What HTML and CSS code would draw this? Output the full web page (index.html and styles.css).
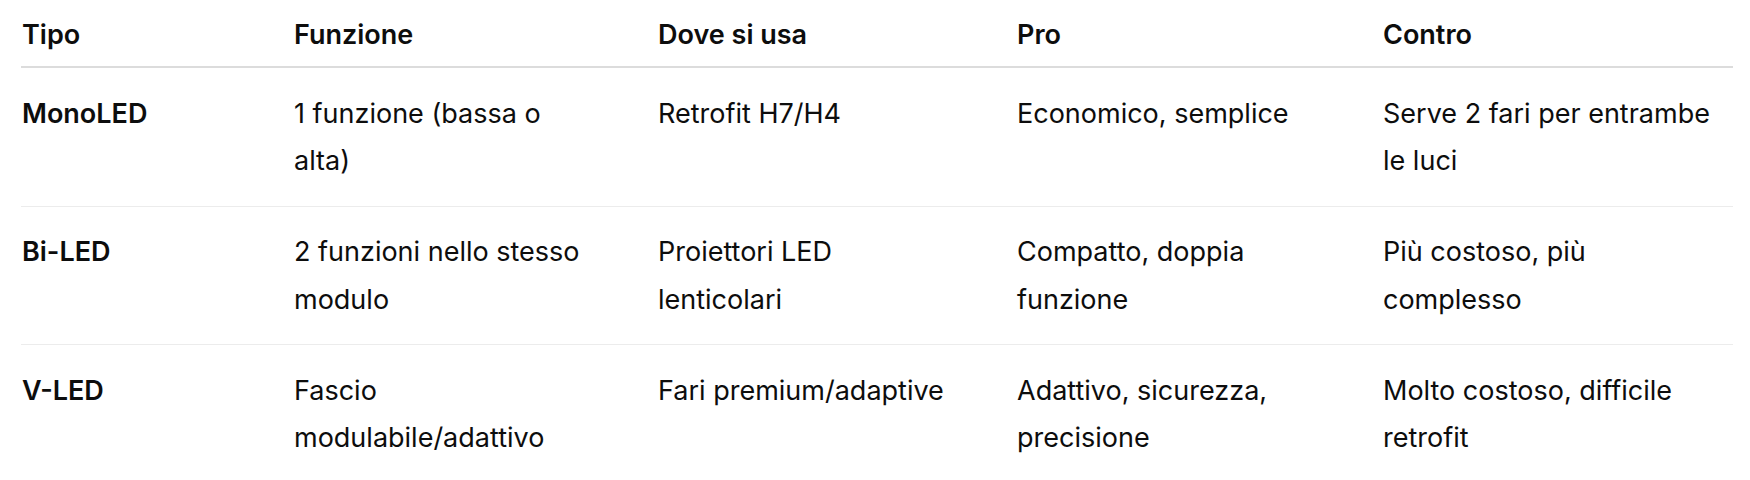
FILE: index.html
```html
<!DOCTYPE html>
<html lang="it">
<head>
<meta charset="utf-8">
<title>Tipi di LED</title>
<link rel="stylesheet" href="styles.css">
</head>
<body>
<table class="cmp">
  <colgroup>
    <col class="c1"><col class="c2"><col class="c3"><col class="c4"><col class="c5">
  </colgroup>
  <thead>
    <tr><th>Tipo</th><th>Funzione</th><th>Dove si usa</th><th>Pro</th><th>Contro</th></tr>
  </thead>
  <tbody>
    <tr><td class="name">MonoLED</td><td>1 funzione (bassa o alta)</td><td>Retrofit H7/H4</td><td>Economico, semplice</td><td>Serve 2 fari per entrambe le luci</td></tr>
    <tr><td class="name">Bi-LED</td><td>2 funzioni nello stesso modulo</td><td>Proiettori LED lenticolari</td><td>Compatto, doppia funzione</td><td>Più costoso, più complesso</td></tr>
    <tr><td class="name">V-LED</td><td>Fascio modulabile/adattivo</td><td>Fari premium/adaptive</td><td>Adattivo, sicurezza, precisione</td><td>Molto costoso, difficile retrofit</td></tr>
  </tbody>
</table>
</body>
</html>
```
FILE: styles.css
```css
html, body {
  margin: 0;
  padding: 0;
  background: #ffffff;
}
body {
  font-family: Inter, "Noto Sans", "Liberation Sans", sans-serif;
  font-size: 27px;
  line-height: 47.25px;
  color: #0d0d0d;
  padding: 0 17px 0 21px;
}
.cmp {
  width: 100%;
  border-collapse: collapse;
  table-layout: fixed;
}
.c1 { width: 272px; }
.c2 { width: 364px; }
.c3 { width: 359px; }
.c4 { width: 366px; }
.c5 { width: 351px; }
.cmp th {
  text-align: left;
  font-weight: 600;
  padding: 10.6px 64px 8.2px 1px;
  border-bottom: 2px solid #dcdcdc;
}
.cmp td {
  vertical-align: top;
  padding: 21.6px 64px 21.6px 1px;
  border-bottom: 1px solid #ececec;
}
.cmp th:last-child,
.cmp td:last-child {
  padding-right: 8px;
}
.cmp tbody tr:last-child td {
  border-bottom: none;
}
.cmp td.name {
  font-weight: 600;
}
```
